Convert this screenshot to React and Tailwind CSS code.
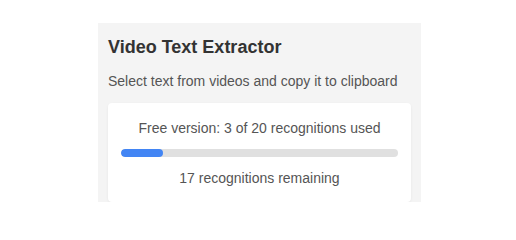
export default function App() {
  return (
    <div className="w-full h-[202px] bg-white overflow-hidden" style={{ fontFamily: '"Liberation Sans", Arial, sans-serif' }}>
      <div className="w-[323px] ml-[98px] mt-[23px] bg-[#f4f4f4] px-[10px] pt-[13px] pb-[20px]">
        <h1 className="text-[18px] font-bold text-[#333] leading-[22px]">Video Text Extractor</h1>
        <p className="text-[14px] text-[#555] leading-[18px] mt-[14px]">Select text from videos and copy it to clipboard</p>
        <div className="mt-[13px] bg-white rounded-[4px] shadow-[0_1px_3px_rgba(0,0,0,0.06)] px-[13px] pt-[16px] pb-[15px] text-center">
          <div className="text-[14px] text-[#555] leading-[18px]">Free version: 3 of 20 recognitions used</div>
          <div className="mt-[12px] h-[8px] rounded-full bg-[#e0e0e0] overflow-hidden">
            <div className="h-full rounded-full bg-[#4285f4]" style={{ width: '15%' }} />
          </div>
          <div className="mt-[12px] text-[14px] text-[#555] leading-[18px]">17 recognitions remaining</div>
        </div>
      </div>
    </div>
  );
}
